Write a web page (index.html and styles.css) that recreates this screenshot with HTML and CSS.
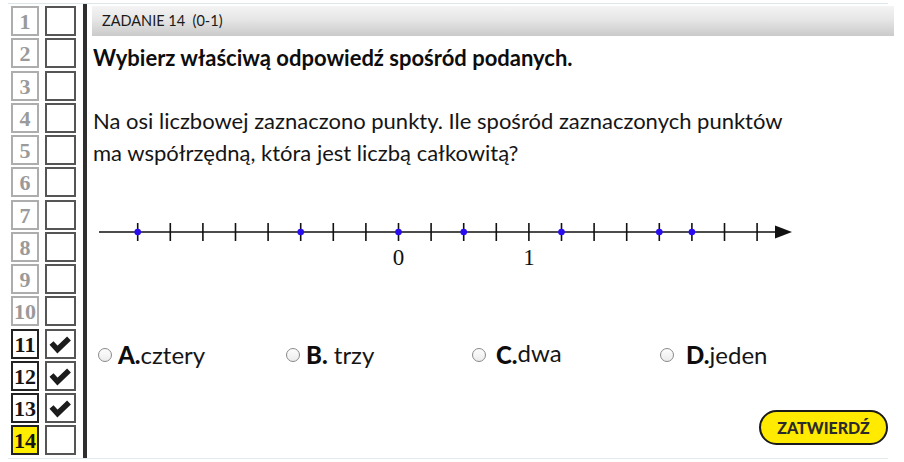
FILE: index.html
```html
<!DOCTYPE html>
<html lang="pl">
<head>
<meta charset="utf-8">
<link rel="stylesheet" href="styles.css">
</head>
<body>
<div class="page">
  <div class="sidebar">
    <div class="row"><div class="num">1</div><div class="chk"></div></div>
    <div class="row"><div class="num">2</div><div class="chk"></div></div>
    <div class="row"><div class="num">3</div><div class="chk"></div></div>
    <div class="row"><div class="num">4</div><div class="chk"></div></div>
    <div class="row"><div class="num">5</div><div class="chk"></div></div>
    <div class="row"><div class="num">6</div><div class="chk"></div></div>
    <div class="row"><div class="num">7</div><div class="chk"></div></div>
    <div class="row"><div class="num">8</div><div class="chk"></div></div>
    <div class="row"><div class="num">9</div><div class="chk"></div></div>
    <div class="row"><div class="num">10</div><div class="chk"></div></div>
    <div class="row done"><div class="num">11</div><div class="chk"><svg viewBox="0 0 26 26" class="tick"><path d="M3.5 12 L9.5 18.5 L21 7.5"/></svg></div></div>
    <div class="row done"><div class="num">12</div><div class="chk"><svg viewBox="0 0 26 26" class="tick"><path d="M3.5 12 L9.5 18.5 L21 7.5"/></svg></div></div>
    <div class="row done"><div class="num">13</div><div class="chk"><svg viewBox="0 0 26 26" class="tick"><path d="M3.5 12 L9.5 18.5 L21 7.5"/></svg></div></div>
    <div class="row current"><div class="num">14</div><div class="chk"></div></div>
  </div>
  <div class="divider"></div>
  <div class="main">
    <div class="header">ZADANIE 14&nbsp; (0-1)</div>
    <div class="title">Wybierz właściwą odpowiedź spośród podanych.</div>
    <div class="question">Na osi liczbowej zaznaczono punkty. Ile spośród zaznaczonych punktów<br>ma współrzędną, która jest liczbą całkowitą?</div>
    <svg class="axis" width="802" height="70" viewBox="91 200 802 70">
      <line x1="98" y1="232" x2="776" y2="232" stroke="#111" stroke-width="1.6"/>
      <polygon points="774,225.5 791,232 774,238.5" fill="#111"/>
      <g stroke="#111" stroke-width="1.6">
        <line x1="136.7" y1="223" x2="136.7" y2="241"/>
        <line x1="169.3" y1="223" x2="169.3" y2="241"/>
        <line x1="201.9" y1="223" x2="201.9" y2="241"/>
        <line x1="234.5" y1="223" x2="234.5" y2="241"/>
        <line x1="267.1" y1="223" x2="267.1" y2="241"/>
        <line x1="299.7" y1="223" x2="299.7" y2="241"/>
        <line x1="332.3" y1="223" x2="332.3" y2="241"/>
        <line x1="364.9" y1="223" x2="364.9" y2="241"/>
        <line x1="397.5" y1="223" x2="397.5" y2="241"/>
        <line x1="430.1" y1="223" x2="430.1" y2="241"/>
        <line x1="462.7" y1="223" x2="462.7" y2="241"/>
        <line x1="495.3" y1="223" x2="495.3" y2="241"/>
        <line x1="527.9" y1="223" x2="527.9" y2="241"/>
        <line x1="560.5" y1="223" x2="560.5" y2="241"/>
        <line x1="593.1" y1="223" x2="593.1" y2="241"/>
        <line x1="625.7" y1="223" x2="625.7" y2="241"/>
        <line x1="658.3" y1="223" x2="658.3" y2="241"/>
        <line x1="690.9" y1="223" x2="690.9" y2="241"/>
        <line x1="723.5" y1="223" x2="723.5" y2="241"/>
        <line x1="756.1" y1="223" x2="756.1" y2="241"/>
      </g>
      <g fill="#2a0cf0">
        <circle cx="136.7" cy="232" r="3.3"/>
        <circle cx="299.7" cy="232" r="3.3"/>
        <circle cx="397.5" cy="232" r="3.3"/>
        <circle cx="462.7" cy="232" r="3.3"/>
        <circle cx="560.5" cy="232" r="3.3"/>
        <circle cx="658.3" cy="232" r="3.3"/>
        <circle cx="690.9" cy="232" r="3.3"/>
      </g>
      <text x="397.5" y="265" class="lbl" text-anchor="middle">0</text>
      <text x="527.9" y="265" class="lbl" text-anchor="middle">1</text>
    </svg>
    <div class="answers">
      <div class="opt"><span class="radio"></span><b>A.</b>cztery</div>
      <div class="opt"><span class="radio"></span><b>B.</b>&nbsp;trzy</div>
      <div class="opt opt-c"><span class="radio"></span><b>C.</b><span class="up">dwa</span></div>
      <div class="opt opt-d"><span class="radio"></span><b>D.</b>jeden</div>
    </div>
    <div class="actions"><button class="submit">ZATWIERDŹ</button></div>
  </div>
</div>
</body>
</html>
```
FILE: styles.css
```css
html, body {
  margin: 0;
  padding: 0;
  background: #fff;
}
body {
  font-family: Lato, "Noto Sans", sans-serif;
  color: #111;
}
.page {
  margin: 3px 0 0 8px;
  width: 880px;
  height: 456px;
  border-top: 1px solid #dde6ea;
  border-bottom: 1px solid #e3eaee;
  display: flex;
  box-sizing: border-box;
}
.sidebar {
  display: flex;
  flex-direction: column;
  gap: 2.25px;
  padding: 2px 0 0 3px;
}
.row {
  display: flex;
  gap: 6px;
}
.num {
  width: 28px;
  height: 30px;
  box-sizing: border-box;
  border: 2px solid #adadad;
  color: #9a9a9a;
  font-family: "Liberation Serif", serif;
  font-weight: bold;
  font-size: 22px;
  line-height: 27px;
  text-align: center;
}
.chk {
  width: 31px;
  height: 30px;
  box-sizing: border-box;
  border: 2px solid #555;
  display: flex;
  align-items: center;
  justify-content: center;
}
.row.done .num {
  border-color: #222;
  color: #151515;
}
.row.current .num {
  border-color: #222;
  color: #151515;
  background: #ffee00;
}
.tick {
  width: 26px;
  height: 26px;
}
.tick path {
  fill: none;
  stroke: #1c1c1c;
  stroke-width: 5.5;
}
.divider {
  width: 4px;
  margin-left: 7px;
  background: #2e2e2e;
}
.main {
  margin-left: 5px;
  width: 802px;
  margin-right: -13px;
  display: flex;
  flex-direction: column;
}
.header {
  margin-top: 2px;
  height: 30px;
  box-sizing: border-box;
  padding-left: 10px;
  font-size: 14.5px;
  line-height: 30px;
  color: #1a1a1a;
  background: linear-gradient(#f4f4f4, #e6e6e6 45%, #cacaca);
}
.title {
  margin-top: 9px;
  padding-left: 1px;
  font-size: 22px;
  line-height: 26px;
  font-weight: bold;
  color: #0d0d0d;
}
.question {
  margin-top: 34px;
  padding-left: 1px;
  font-size: 22px;
  line-height: 32px;
  color: #151515;
}
.axis {
  display: block;
  margin-top: 31px;
}
.lbl {
  font-family: "Liberation Serif", serif;
  font-size: 23px;
  fill: #111;
}
.answers {
  margin-top: 70px;
  padding-left: 6px;
  display: grid;
  grid-template-columns: 188px 186px 188px 188px;
  font-size: 24px;
  line-height: 30px;
  color: #151515;
}
.opt {
  display: flex;
  align-items: center;
}
.opt b {
  font-weight: 900;
  color: #0d0d0d;
}
.radio {
  width: 14px;
  height: 14px;
  box-sizing: border-box;
  border: 1px solid #8a8a8a;
  border-radius: 50%;
  background: linear-gradient(#fdfdfd, #ececec);
  margin-right: 6px;
}
.opt-c .radio {
  margin-right: 10px;
}
.opt-d .radio {
  margin-right: 12px;
}
.up {
  position: relative;
  top: -2px;
}
.actions {
  margin-top: 40px;
  display: flex;
  justify-content: flex-end;
  padding-right: 6px;
}
.submit {
  width: 129px;
  height: 35px;
  border: 2px solid #1a1a1a;
  border-radius: 18px;
  background: #ffea00;
  font-family: Lato, sans-serif;
  font-weight: 900;
  font-size: 16px;
  color: #2b2b2b;
  padding: 0;
  cursor: pointer;
}
```
